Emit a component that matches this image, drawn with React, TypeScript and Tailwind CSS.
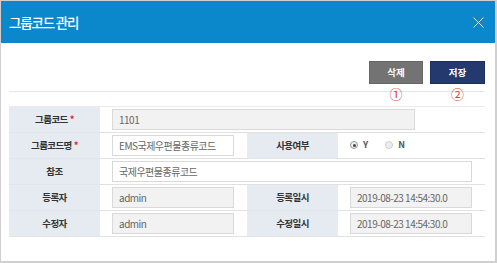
import React from 'react';

const Req = () => <span className="text-[#e0282e] ml-[2px]">*</span>;

const Label = ({ children }: { children: React.ReactNode }) => (
  <div className="bg-[#e6ebf2] border-b border-[#e1e4e8] flex items-center justify-center text-[9.5px] font-bold text-[#333] tracking-[-0.6px]">
    {children}
  </div>
);

const Cell = ({ children, span = false }: { children?: React.ReactNode; span?: boolean }) => (
  <div className={`${span ? 'col-span-3' : ''} border-b border-[#e1e1e1] flex items-center pl-3`}>
    {children}
  </div>
);

const Field = ({ value, width, readOnly = false }: { value: string; width: string; readOnly?: boolean }) => (
  <div
    className={`${width} h-[21px] border border-[#d9d9d9] ${readOnly ? 'bg-[#f2f2f2]' : 'bg-white'} flex items-center pl-[6px] text-[10px] text-[#666] tracking-[-0.5px] whitespace-nowrap overflow-hidden`}
  >
    {value}
  </div>
);

const Radio = ({ checked, label }: { checked: boolean; label: string }) => (
  <div className="flex items-center gap-[5px]">
    <span
      className={`w-[8px] h-[8px] rounded-full border ${checked ? 'border-[#9a9a9a]' : 'border-[#cccccc]'} bg-[#eeeeee] flex items-center justify-center`}
    >
      {checked && <span className="w-[3px] h-[3px] rounded-full bg-[#444]" />}
    </span>
    <span className="text-[9px] font-bold text-[#555]">{label}</span>
  </div>
);

const App: React.FC = () => {
  return (
    <div className="w-[497px] h-[263px] bg-white border-l border-t border-r-2 border-b-2 border-[#d0d0d0] font-['Noto_Sans_CJK_KR',sans-serif] overflow-hidden">
      {/* Header */}
      <header className="h-[42px] bg-[#0b88cb] flex items-center justify-between pl-2 pr-[11px]">
        <h1 className="text-white text-[13.5px] tracking-[-1.2px] font-medium">그룹코드 관리</h1>
        <svg width="11" height="11" viewBox="0 0 11 11" className="text-[#d6ecf8]">
          <path d="M0.5 0.5L10.5 10.5M10.5 0.5L0.5 10.5" stroke="currentColor" strokeWidth="1" />
        </svg>
      </header>

      <div className="pl-2 pr-[10px]">
        {/* Buttons */}
        <div className="flex justify-end gap-[7px] pt-[14px]">
          <div className="relative">
            <button className="w-[54px] h-[23px] bg-[#737373] border border-[#666] text-white text-[9.5px] font-bold">삭제</button>
            <span className="absolute left-1/2 -translate-x-1/2 top-[calc(100%+3px)] text-[#e53935] text-[13px] leading-none">①</span>
          </div>
          <div className="relative">
            <button className="w-[55px] h-[23px] bg-[#243a6e] border border-[#1d2f5c] text-white text-[9.5px] font-bold">저장</button>
            <span className="absolute left-1/2 -translate-x-1/2 top-[calc(100%+3px)] text-[#e53935] text-[13px] leading-none">②</span>
          </div>
        </div>

        <div className="mt-[7px] h-px bg-[#e6e6e6]" />

        {/* Form table */}
        <div className="mt-[14px] grid grid-cols-[91px_147px_91px_147px] auto-rows-[26px] border-t border-[#ebebeb]">
          <Label>
            그룹코드<Req />
          </Label>
          <Cell span>
            <Field value="1101" width="w-[303px]" readOnly />
          </Cell>

          <Label>
            그룹코드명<Req />
          </Label>
          <Cell>
            <Field value="EMS국제우편물종류코드" width="w-[122px]" />
          </Cell>
          <Label>사용여부</Label>
          <Cell>
            <div className="flex items-center gap-[17px]">
              <Radio checked label="Y" />
              <Radio checked={false} label="N" />
            </div>
          </Cell>

          <Label>참조</Label>
          <Cell span>
            <Field value="국제우편물종류코드" width="w-[360px]" />
          </Cell>

          <Label>등록자</Label>
          <Cell>
            <Field value="admin" width="w-[122px]" readOnly />
          </Cell>
          <Label>등록일시</Label>
          <Cell>
            <Field value="2019-08-23 14:54:30.0" width="w-[122px]" readOnly />
          </Cell>

          <Label>수정자</Label>
          <Cell>
            <Field value="admin" width="w-[122px]" readOnly />
          </Cell>
          <Label>수정일시</Label>
          <Cell>
            <Field value="2019-08-23 14:54:30.0" width="w-[122px]" readOnly />
          </Cell>
        </div>
      </div>
    </div>
  );
};

export default App;
